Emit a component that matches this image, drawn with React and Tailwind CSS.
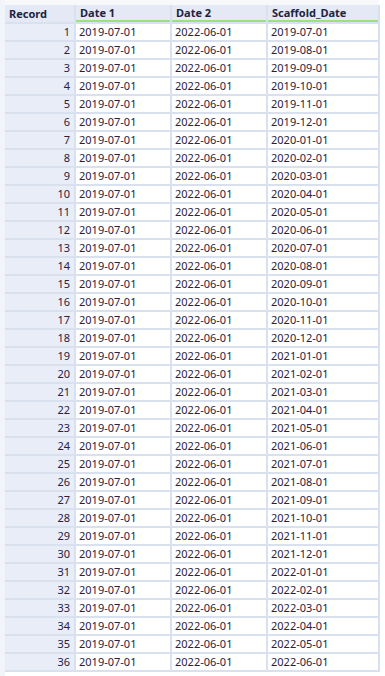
import React from "react";

const rows = Array.from({ length: 36 }, (_, i) => {
  const m = 7 + i;
  const y = 2019 + Math.floor((m - 1) / 12);
  const mo = ((m - 1) % 12) + 1;
  return { n: i + 1, s: `${y}-${String(mo).padStart(2, "0")}-01` };
});

export default function App() {
  return (
    <div
      className="w-[385px] h-[676px] bg-white overflow-hidden flex"
      style={{ fontFamily: '"Segoe UI", "Noto Sans", "Open Sans", sans-serif' }}
    >
      <div className="w-[5px] h-full bg-[#f1f4f9] shrink-0" />
      <div className="flex flex-col">
        <div className="h-[5px] w-[374px] bg-[#f7f8fa]" />
        <div className="grid grid-cols-[69px_94px_94px_110px] gap-[2px] bg-[#d9e0ee] pr-[2px] pb-[2px] w-[375px] text-[11px] leading-[16px]">
          <div className="h-[17px] bg-[#e4e9f5] pl-[4px] font-bold text-[#1e2440] leading-[17px]">Record</div>
          <div className="h-[17px] bg-[#e4e9f5] pl-[4px] font-bold text-[#1e2440] border-b-2 border-[#9be27a] leading-[15px]">Date 1</div>
          <div className="h-[17px] bg-[#e4e9f5] pl-[4px] font-bold text-[#1e2440] border-b-2 border-[#9be27a] leading-[15px]">Date 2</div>
          <div className="h-[17px] bg-[#e4e9f5] pl-[4px] font-bold text-[#1e2440] border-b-2 border-[#9be27a] leading-[15px]">Scaffold_Date</div>
          {rows.map((r) => (
            <React.Fragment key={r.n}>
              <div className="h-[16px] bg-[#e8edf8] text-right pr-[4px] text-[#2a2140]">{r.n}</div>
              <div className="h-[16px] bg-white pl-[3px] text-[#2a2140]">2019-07-01</div>
              <div className="h-[16px] bg-white pl-[3px] text-[#2a2140]">2022-06-01</div>
              <div className="h-[16px] bg-white pl-[3px] text-[#2a2140]">{r.s}</div>
            </React.Fragment>
          ))}
        </div>
      </div>
    </div>
  );
}
